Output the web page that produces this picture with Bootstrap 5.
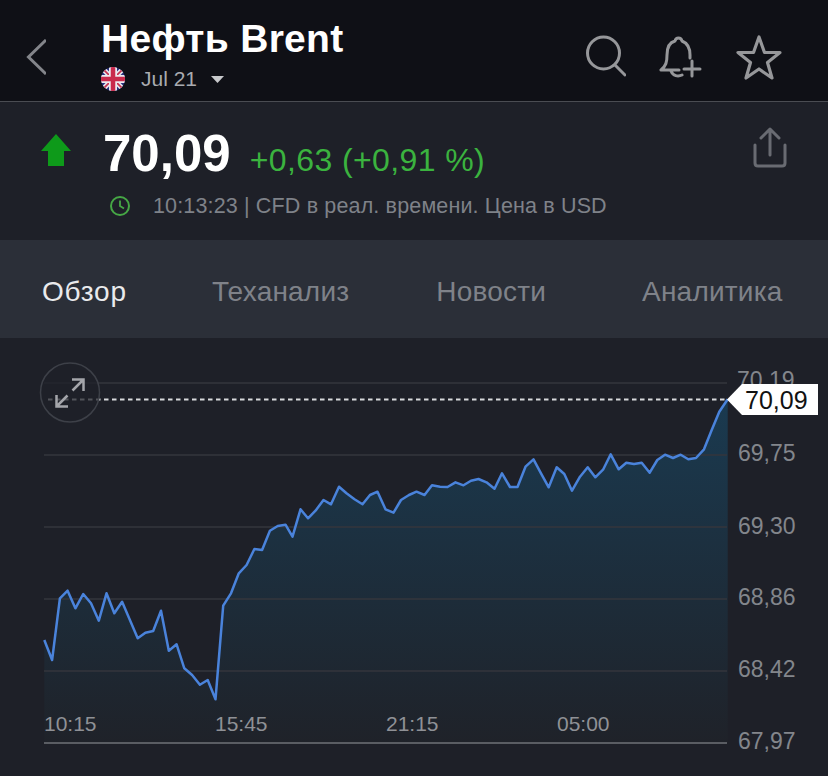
<!DOCTYPE html>
<html lang="ru">
<head>
<meta charset="utf-8">
<title>Нефть Brent</title>
<link href="https://cdn.jsdelivr.net/npm/bootstrap@5.3.0/dist/css/bootstrap.min.css" rel="stylesheet">
<style>
html,body{margin:0;background:#1e2028;}
body{width:828px;height:776px;overflow:hidden;font-family:"Liberation Sans",Arial,sans-serif;color:#fff;}
.hdr{height:102px;background:#0f1016;border-bottom:1px solid #4a4c52;padding-left:26px;padding-right:46px;}
.back{margin-top:39px;}
.ttl-wrap{margin-left:55px;padding-top:17px;}
.ttl{font-size:39px;line-height:44px;font-weight:700;letter-spacing:.3px;}
.sub{font-size:21px;line-height:26px;color:#a9abb0;margin-top:5px;}
.sub span{margin-left:16px;}
.sub svg.car{margin-left:14px;}
.acts{margin-left:auto;gap:33px;padding-top:35px;}
.qt{height:138px;padding:0 41px;}
.arr{margin-top:32px;}
.qt-main{margin-left:32px;padding-top:22px;}
.px{font-size:51px;line-height:60px;font-weight:700;}
.chg{font-size:32px;line-height:40px;color:#3bb33f;margin-left:19px;letter-spacing:.4px;}
.tm{font-size:21.500px;line-height:26px;color:#7f8289;margin-top:9px;margin-left:7px;letter-spacing:.15px;}
.tm svg{margin-right:23px;}
.shr{margin-left:auto;margin-top:25px;}
.tabsbar{height:98px;background:#2b2f38;padding:6px 0 0 42px;font-size:28px;letter-spacing:.2px;color:#7f8289;}
.tabsbar .on{color:#e9eaec;letter-spacing:.8px;}
.tb2{margin-left:85px;}
.tb3{margin-left:87px;}
.tb4{margin-left:96px;}
.chartbox{height:438px;}
.chartbox svg{display:block;}
.lbl{font-size:23px;fill:#83868c;}
.lbl-t{font-size:21px;fill:#8f9196;}
.lbl-p{font-size:25px;fill:#111;}
</style>
</head>
<body>
<header class="hdr d-flex">
  <svg class="back flex-shrink-0" width="20" height="36" viewBox="0 0 20 36" fill="none"><path d="M20 1 2.500 18 20 35" stroke="#83858a" stroke-width="3"/></svg>
  <div class="ttl-wrap">
    <div class="ttl">Нефть Brent</div>
    <div class="sub d-flex align-items-center">
      <svg width="24" height="24" viewBox="0 0 24 24"><defs><clipPath id="fc"><circle cx="12" cy="12" r="12"/></clipPath></defs><g clip-path="url(#fc)"><rect width="24" height="24" fill="#27307e"/><path d="M0 0 24 24M24 0 0 24" stroke="#e6e4ea" stroke-width="5"/><path d="M0 0 24 24M24 0 0 24" stroke="#c7304e" stroke-width="1.600"/><path d="M12 0V24M0 12H24" stroke="#ece9ee" stroke-width="8"/><path d="M12 0V24M0 12H24" stroke="#c92a4c" stroke-width="4.500"/></g></svg>
      <span>Jul 21</span>
      <svg class="car" width="13" height="7" viewBox="0 0 13 7"><path d="M0 0H13L6.500 7Z" fill="#c8c9cc"/></svg>
    </div>
  </div>
  <div class="acts d-flex align-items-start">
    <svg width="40" height="42" viewBox="0 0 40 42" fill="none" stroke="#96979a" stroke-width="3" stroke-linecap="round"><circle cx="17.500" cy="18" r="16"/><path d="M29 30 39 40"/></svg>
    <svg width="44" height="44" viewBox="0 0 44 44" fill="none" stroke="#96979a" stroke-width="3" stroke-linecap="round" stroke-linejoin="round"><path d="M2 35C7 31 8 27 8 20 8 11 12 7 16 6 17 2 22 2 23 6 28 8 31 12 31 20V23M2 35H20M12 36C14 41 19 42 23 40"/><path d="M33 26V41M25 34H41"/></svg>
    <svg width="46" height="46" viewBox="0 0 46 46" fill="none" stroke="#96979a" stroke-width="3.200" stroke-linejoin="round"><path d="M23 2 28.500 17.500 44 17.500 31.500 27.500 36 43 23 34 10 43 14.500 27.500 2 17.500 17.500 17.500Z"/></svg>
  </div>
</header>

<section class="qt d-flex">
  <svg class="arr flex-shrink-0" width="30" height="32" viewBox="0 0 30 32"><path d="M15 0 30 17H23V32H7V17H0Z" fill="#0e9a1a"/></svg>
  <div class="qt-main">
    <div class="d-flex align-items-baseline">
      <div class="px">70,09</div>
      <div class="chg">+0,63 (+0,91 %)</div>
    </div>
    <div class="tm d-flex align-items-center">
      <svg width="20" height="20" viewBox="0 0 20 20" fill="none" stroke="#46a745" stroke-width="2"><circle cx="10" cy="10" r="9"/><path d="M10 4.500V10L14 12.500" stroke-width="1.800"/></svg>
      <span>10:13:23 | CFD в реал. времени. Цена в USD</span>
    </div>
  </div>
  <svg class="shr flex-shrink-0" width="34" height="41" viewBox="0 0 34 41" fill="none" stroke="#696b72" stroke-width="3" stroke-linecap="round" stroke-linejoin="round"><path d="M17 2V28M8 11 17 2 26 11"/><path d="M2 18V36Q2 39 5 39H29Q32 39 32 36V18"/></svg>
</section>

<nav class="tabsbar d-flex align-items-center">
  <span class="on">Обзор</span><span class="tb2">Теханализ</span><span class="tb3">Новости</span><span class="tb4">Аналитика</span>
</nav>

<div class="chartbox">
<svg width="828" height="438" viewBox="0 338 828 438" xmlns="http://www.w3.org/2000/svg">
  <defs><linearGradient id="ar" gradientUnits="userSpaceOnUse" x1="0" y1="400" x2="0" y2="743"><stop offset="0" stop-color="#1a3a50"/><stop offset="1" stop-color="#1f2229"/></linearGradient></defs>
  <path d="M74 338 84 328 94 338Z" fill="#1e2028"/>
  <path fill="url(#ar)" d="M44.300 743 44.300 640 52.100 660 59.900 598.300 67.600 590.700 75.400 608.300 83.200 594 91 603.300 98.800 620.700 106.500 593.300 114.300 613.300 122.100 601.700 129.900 620 137.700 638.300 145.400 632.700 153.200 631 161 610.700 168.800 650.700 176.600 644.300 184.300 668.300 192.100 675 199.900 684.700 207.700 680 215.500 699.300 223.200 605.700 231 593.300 238.800 573.300 246.600 565 254.400 549 262.100 550 269.900 530.700 277.700 526 285.500 524.700 292.500 536.700 300.500 509.300 308 518.300 315.500 510.700 323.500 500 331 504.300 339 486.700 346.500 493.300 354.500 499.300 362.500 504.300 370 495 377.500 491.700 385.500 509.300 393.500 512.700 401 500 409 495 416.500 491.700 424.500 495 432 485.300 440 486.700 447.500 487 455.500 482.300 463.500 485.300 471 480.700 478.500 479 486.500 482.300 494.500 488.700 502 473.300 510 487 517.500 487 525.500 466.700 533.500 459.300 541 473.300 548.700 487.300 556.700 467.300 564.300 474 572 490.700 580 476.700 587.700 467.300 595.300 477.300 603.300 469.300 610.700 454.300 618.700 469.300 626.300 462.700 634 464 641.700 462.700 649.700 472.700 657.300 460 665 454.700 673 458 680.700 454.700 688.300 459.300 696 458 704 449.300 711.700 430 719.300 411.700 727.700 399.300 727.700 743Z"/>
  <path d="M44 383H727M44 455H727M44 527H727M44 599H727M44 671H727" stroke="#34363d" stroke-width="1.500"/>
  <path d="M44 743H727" stroke="#5a5d63" stroke-width="2"/>
  <polyline fill="none" stroke="#4a83db" stroke-width="2.500" stroke-linejoin="round" points="44.300,640 52.100,660 59.900,598.300 67.600,590.700 75.400,608.300 83.200,594 91,603.300 98.800,620.700 106.500,593.300 114.300,613.300 122.100,601.700 129.900,620 137.700,638.300 145.400,632.700 153.200,631 161,610.700 168.800,650.700 176.600,644.300 184.300,668.300 192.100,675 199.900,684.700 207.700,680 215.500,699.300 223.200,605.700 231,593.300 238.800,573.300 246.600,565 254.400,549 262.100,550 269.900,530.700 277.700,526 285.500,524.700 292.500,536.700 300.500,509.300 308,518.300 315.500,510.700 323.500,500 331,504.300 339,486.700 346.500,493.300 354.500,499.300 362.500,504.300 370,495 377.500,491.700 385.500,509.300 393.500,512.700 401,500 409,495 416.500,491.700 424.500,495 432,485.300 440,486.700 447.500,487 455.500,482.300 463.500,485.300 471,480.700 478.500,479 486.500,482.300 494.500,488.700 502,473.300 510,487 517.500,487 525.500,466.700 533.500,459.300 541,473.300 548.700,487.300 556.700,467.300 564.300,474 572,490.700 580,476.700 587.700,467.300 595.300,477.300 603.300,469.300 610.700,454.300 618.700,469.300 626.300,462.700 634,464 641.700,462.700 649.700,472.700 657.300,460 665,454.700 673,458 680.700,454.700 688.300,459.300 696,458 704,449.300 711.700,430 719.300,411.700 727.700,399.300"/>
  <path d="M48 399.500H727" stroke="#d8d9dc" stroke-width="2" stroke-dasharray="4.500 3.500"/>
  <circle cx="70" cy="392.500" r="29.500" fill="#1e2028" fill-opacity=".72" stroke="#3d4048" stroke-width="1.500"/>
  <g fill="none" stroke="#a4a5aa" stroke-width="2.500"><path d="M72 379.500H83.500V391M83.500 379.500 72.500 390.500"/><path d="M56.500 395V406.500H68M56.500 406.500 67.500 395.500"/></g>
  <text class="lbl" x="737" y="388">70,19</text><text class="lbl" x="738" y="461">69,75</text><text class="lbl" x="738" y="534">69,30</text><text class="lbl" x="738" y="605">68,86</text><text class="lbl" x="738" y="677">68,42</text><text class="lbl" x="738" y="749">67,97</text>
  <path d="M727 399.500 742 384H818V415H742Z" fill="#fff"/>
  <text class="lbl-p" x="745" y="409">70,09</text>
  <text class="lbl-t" x="44" y="731">10:15</text><text class="lbl-t" x="215" y="731">15:45</text><text class="lbl-t" x="386" y="731">21:15</text><text class="lbl-t" x="557" y="731">05:00</text>
</svg>
</div>
</body>
</html>
